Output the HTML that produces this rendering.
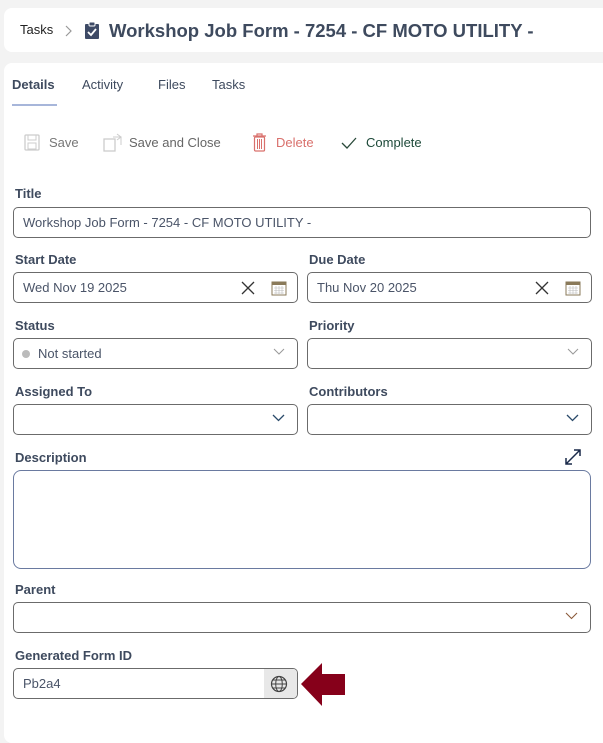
<!DOCTYPE html>
<html><head><style>
body{margin:0;width:603px;height:723px;background:#f3f3f3;font-family:"Liberation Sans",sans-serif;position:relative;overflow:hidden;color:#3a4556}
.card{position:absolute;background:#fff;border-radius:8px}
.abs{position:absolute}
.lbl{position:absolute;left:15px;font-size:13px;font-weight:bold;color:#3e4a5e}
.inp{position:absolute;height:30px;border:1px solid #6b6b6b;border-radius:5px;box-sizing:border-box;background:#fff;font-size:13px;color:#4a5468;line-height:29px;padding-left:9px}
.chev{position:absolute;right:12px;top:9px}
</style></head><body>
<div class="card" style="left:4px;top:8px;width:620px;height:44px"></div>
<div class="abs" style="left:20px;top:22px;font-size:13px;color:#222">Tasks</div>
<svg class="abs" style="left:64px;top:24px" width="10" height="14"><path d="M2 2l5 5-5 5" fill="none" stroke="#999" stroke-width="1.2"/></svg>
<svg class="abs" style="left:84px;top:21px" width="16" height="19"><rect x="1" y="3" width="14" height="15" rx="1" fill="#3e4a66"/><rect x="5" y="1" width="6" height="4" rx="1" fill="#3e4a66" stroke="#fff" stroke-width="1"/><path d="M4 11l3 3 5-6" fill="none" stroke="#fff" stroke-width="1.8"/></svg>
<div class="abs" style="left:109px;top:20px;font-size:18.5px;font-weight:bold;color:#3e4a5e">Workshop Job Form - 7254 - CF MOTO UTILITY -</div>

<div class="card" style="left:4px;top:63px;width:620px;height:680px"></div>
<div class="abs" style="left:12px;top:77px;font-size:13px;font-weight:bold;color:#3e4a5e">Details</div>
<div class="abs" style="left:12px;top:104px;width:45px;height:2px;background:#a7b6da"></div>
<div class="abs" style="left:82px;top:77px;font-size:13px;color:#3e4a5e">Activity</div>
<div class="abs" style="left:158px;top:77px;font-size:13px;color:#3e4a5e">Files</div>
<div class="abs" style="left:212px;top:77px;font-size:13px;color:#3e4a5e">Tasks</div>

<svg class="abs" style="left:24px;top:134px" width="16" height="17"><rect x="1" y="1" width="14" height="15" rx="1" fill="none" stroke="#ccc" stroke-width="1.3"/><rect x="4" y="1" width="8" height="5" fill="none" stroke="#ccc"/><rect x="4" y="9" width="8" height="6" fill="none" stroke="#ccc"/></svg>
<div class="abs" style="left:49px;top:135px;font-size:13px;color:#777">Save</div>
<svg class="abs" style="left:103px;top:133px" width="20" height="19"><rect x="1" y="6" width="11" height="12" fill="none" stroke="#ccc" stroke-width="1.3"/><path d="M10 4h8v8M14 1l4 3-4 3" fill="none" stroke="#ccc"/></svg>
<div class="abs" style="left:129px;top:135px;font-size:13px;color:#666">Save and Close</div>
<svg class="abs" style="left:252px;top:133px" width="15" height="19"><path d="M1 3h13M5 3V1h5v2" fill="none" stroke="#d9706c" stroke-width="1.2"/><rect x="2.5" y="4" width="10" height="14" rx="1" fill="none" stroke="#d9706c" stroke-width="1.2"/><path d="M5.5 6v10M7.5 6v10M9.5 6v10" stroke="#d9706c"/></svg>
<div class="abs" style="left:276px;top:135px;font-size:13px;color:#d9706c">Delete</div>
<svg class="abs" style="left:341px;top:137px" width="16" height="12"><path d="M1 6l5 5 9-10" fill="none" stroke="#2a4a3a" stroke-width="1.3"/></svg>
<div class="abs" style="left:366px;top:135px;font-size:13px;color:#1e4a3a">Complete</div>

<div class="lbl" style="top:186px">Title</div>
<div class="inp" style="left:13px;top:207px;width:578px;height:31px">Workshop Job Form - 7254 - CF MOTO UTILITY -</div>

<div class="lbl" style="top:252px">Start Date</div>
<div class="lbl" style="top:252px;left:309px">Due Date</div>
<div class="inp" style="left:13px;top:272px;width:285px;height:31px">Wed Nov 19 2025</div>
<div class="inp" style="left:307px;top:272px;width:285px;height:31px">Thu Nov 20 2025</div>
<svg class="abs" style="left:241px;top:281px" width="14" height="14"><path d="M1 1l12 12M13 1L1 13" stroke="#333" stroke-width="1.3"/></svg>
<svg class="abs" style="left:535px;top:281px" width="14" height="14"><path d="M1 1l12 12M13 1L1 13" stroke="#333" stroke-width="1.3"/></svg>
<svg class="abs" style="left:271px;top:280px" width="16" height="16"><rect x="1" y="2" width="14" height="13" fill="#fff" stroke="#8a7a5a"/><rect x="1" y="2" width="14" height="3" fill="#8a7a5a"/><path d="M3 8h10M3 10.5h10M3 13h10M5 6v8M8 6v8M11 6v8" stroke="#bbb" stroke-width=".6"/></svg>
<svg class="abs" style="left:565px;top:280px" width="16" height="16"><rect x="1" y="2" width="14" height="13" fill="#fff" stroke="#8a7a5a"/><rect x="1" y="2" width="14" height="3" fill="#8a7a5a"/><path d="M3 8h10M3 10.5h10M3 13h10M5 6v8M8 6v8M11 6v8" stroke="#bbb" stroke-width=".6"/></svg>

<div class="lbl" style="top:318px">Status</div>
<div class="lbl" style="top:318px;left:309px">Priority</div>
<div class="inp" style="left:13px;top:338px;width:285px;height:31px;padding-left:24px">Not started<span class="abs" style="left:8px;top:11px;width:8px;height:8px;border-radius:50%;background:#bbb"></span><svg class="chev" width="12" height="8"><path d="M1 1l5 5 5-5" fill="none" stroke="#999"/></svg></div>
<div class="inp" style="left:307px;top:338px;width:285px;height:31px"><svg class="chev" width="12" height="8"><path d="M1 1l5 5 5-5" fill="none" stroke="#999"/></svg></div>

<div class="lbl" style="top:384px">Assigned To</div>
<div class="lbl" style="top:384px;left:309px">Contributors</div>
<div class="inp" style="left:13px;top:404px;width:285px;height:31px"><svg class="chev" width="13" height="8"><path d="M1 1l5.5 5.5 5.5-5.5" fill="none" stroke="#2a4a6a" stroke-width="1.3"/></svg></div>
<div class="inp" style="left:307px;top:404px;width:285px;height:31px"><svg class="chev" width="13" height="8"><path d="M1 1l5.5 5.5 5.5-5.5" fill="none" stroke="#2a4a6a" stroke-width="1.3"/></svg></div>

<div class="lbl" style="top:450px">Description</div>
<svg class="abs" style="left:564px;top:448px" width="18" height="18"><path d="M2 16L16 2M2 10v6h6M16 8V2h-6" fill="none" stroke="#1a2a4a" stroke-width="1.5"/></svg>
<div class="inp" style="left:13px;top:470px;width:578px;height:99px;border-color:#6a7aa0;border-radius:8px"></div>

<div class="lbl" style="top:582px">Parent</div>
<div class="inp" style="left:13px;top:602px;width:578px;height:31px"><svg class="chev" width="13" height="8"><path d="M1 1l5.5 5.5 5.5-5.5" fill="none" stroke="#8a5a3a" stroke-width="1.1"/></svg></div>

<div class="lbl" style="top:648px">Generated Form ID</div>
<div class="inp" style="left:13px;top:668px;width:285px;height:31px;overflow:hidden">Pb2a4<div class="abs" style="right:0;top:0;width:33px;height:31px;background:#e8e8e8"></div></div>
<svg class="abs" style="left:270px;top:675px" width="18" height="18"><circle cx="9" cy="9" r="7.5" fill="none" stroke="#444" stroke-width="1.2"/><ellipse cx="9" cy="9" rx="3.3" ry="7.5" fill="none" stroke="#444"/><path d="M1.5 9h15M3 5h12M3 13h12" stroke="#444"/></svg>
<svg class="abs" style="left:300px;top:661px" width="46" height="46"><path d="M1 23L22 2v11h23v21H22v11z" fill="#86001a"/></svg>
</body></html>
